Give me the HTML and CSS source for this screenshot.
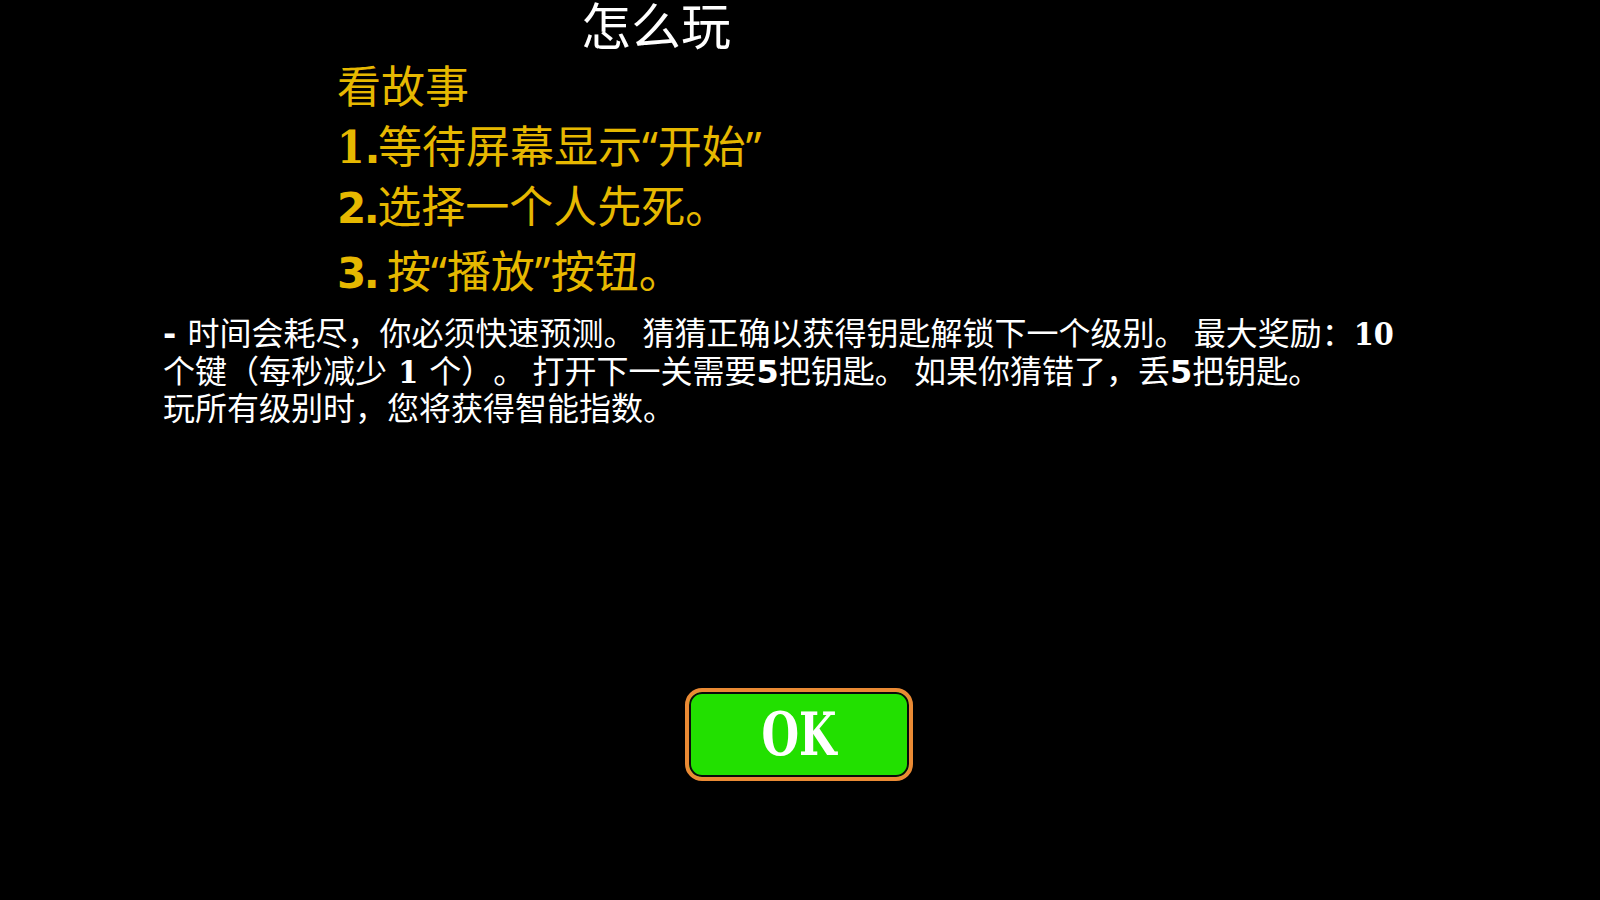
FILE: index.html
```html
<!DOCTYPE html>
<html lang="zh-CN">
<head>
<meta charset="utf-8">
<title>怎么玩</title>
<link rel="stylesheet" href="styles.css">
</head>
<body>
<main class="screen">
  <h1 class="title">怎么玩</h1>
  <section class="steps">
    <p class="step">看故事</p>
    <p class="step"><span class="slab">1</span><span class="num">.</span>等待屏幕显示<span class="q">“</span>开始<span class="q">”</span></p>
    <p class="step"><span class="num">2.</span>选择一个人先死。</p>
    <p class="step step-last"><span class="num">3.</span> 按<span class="q">“</span>播放<span class="q">”</span>按钮。</p>
  </section>
  <div class="rules">
    <span class="line"><span class="num dash">-</span> 时间会耗尽，你必须快速预测。 猜猜正确以获得钥匙解锁下一个级别。 最大奖励：<span class="slab">10</span></span>
    <span class="line">个键（每秒减少 <span class="slab one">1</span> 个）。 打开下一关需要<span class="num">5</span>把钥匙。 如果你猜错了，丢<span class="num">5</span>把钥匙。</span>
    <span class="line">玩所有级别时，您将获得智能指数。</span>
  </div>
  <div class="actions">
    <button class="ok" type="button"><span class="ok-label">OK</span></button>
  </div>
</main>
</body>
</html>
```

FILE: styles.css
```css
html, body {
  margin: 0;
  padding: 0;
  background: #000;
}

body {
  width: 1600px;
  height: 900px;
  overflow: hidden;
  font-family: "Noto Sans CJK SC", "Noto Sans", sans-serif;
  color: #fff;
  text-spacing-trim: space-all;
}

.screen {
  display: flex;
  flex-direction: column;
  padding-top: 1px;
}

.title {
  margin: 0;
  padding-left: 581px;
  font-size: 50px;
  line-height: 44px;
  height: 44px;
  font-weight: 400;
  color: #fff;
}

.steps {
  display: flex;
  flex-direction: column;
  padding-left: 337px;
  margin-top: 9px;
}

.step {
  margin: 0;
  font-size: 44px;
  line-height: 60px;
  height: 60px;
  color: #e6b800;
  white-space: nowrap;
}

.step-last {
  margin-top: 5px;
}

.q {
  font-family: "Noto Sans", "DejaVu Sans", sans-serif;
}

.num {
  font-family: "DejaVu Sans", "Liberation Sans", sans-serif;
  font-weight: 700;
}

.step .num {
  font-size: 42px;
  letter-spacing: -2.5px;
}

.slab {
  font-family: "DejaVu Serif", "Liberation Serif", serif;
  font-weight: 700;
  font-stretch: condensed;
}

.step .slab {
  font-size: 44px;
}

.rules {
  display: flex;
  flex-direction: column;
  margin-top: 14px;
  padding-left: 163px;
  font-size: 32px;
  color: #fff;
  white-space: nowrap;
}

.line {
  display: block;
  height: 37.5px;
  line-height: 37.5px;
}

.dash {
  margin-right: 4px;
}

.one {
  margin: 0 4px;
}

.actions {
  display: flex;
  justify-content: center;
  margin-top: 262px;
}

.ok {
  box-sizing: border-box;
  width: 228px;
  height: 93px;
  margin-left: -2px;
  border: 4px solid #ea8a34;
  border-radius: 17px;
  background: #22e000;
  box-shadow: inset 0 0 0 2px #0a0a0a;
  display: flex;
  align-items: center;
  justify-content: center;
  padding: 0;
}

.ok-label {
  display: inline-block;
  font-family: "DejaVu Serif", "Liberation Serif", serif;
  font-weight: 700;
  font-stretch: condensed;
  font-size: 60px;
  line-height: 60px;
  color: #fff;
  transform: scaleX(0.8);
}
```
